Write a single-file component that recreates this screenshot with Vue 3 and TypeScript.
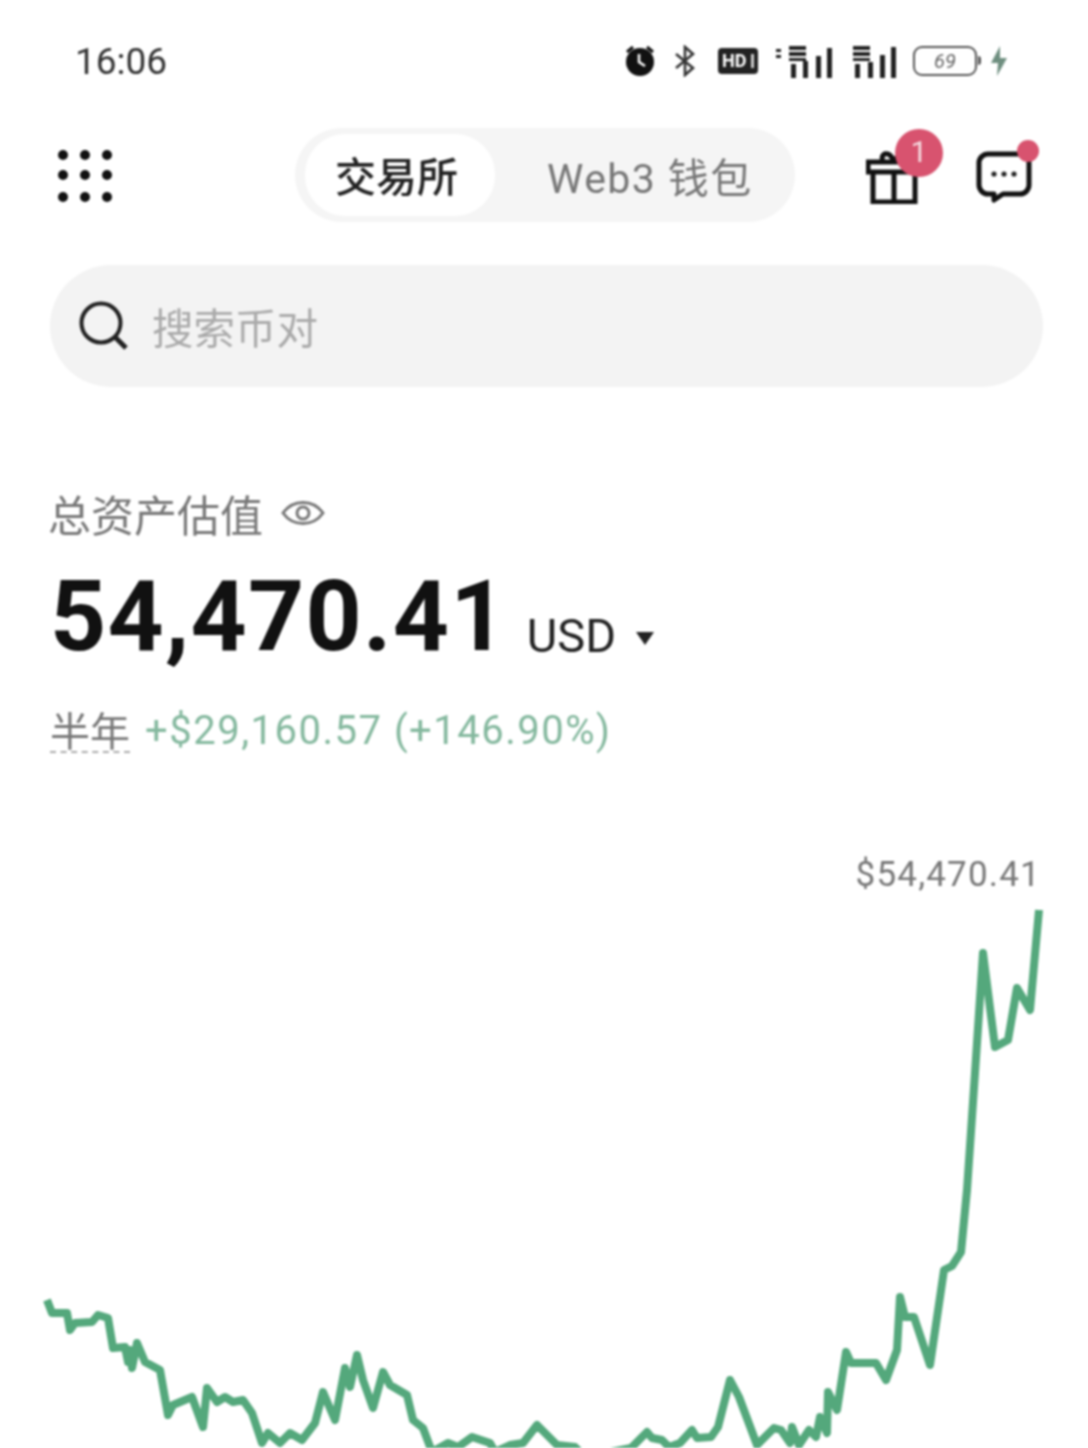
<script setup lang="ts">
// balance history, in page pixels (svg viewBox starts at the chart's top)
const history: [number, number][] = [
  [47, 1300], [52, 1313], [67, 1313], [70, 1330], [75, 1323], [92, 1322], [98, 1315], [108, 1318],
  [113, 1348], [125, 1347], [128, 1362], [130, 1350], [132, 1368], [137, 1343], [145, 1362], [160, 1370], [168, 1415], [173, 1405],
  [192, 1397], [203, 1427], [207, 1388], [217, 1402], [225, 1397], [233, 1402], [243, 1400], [252, 1413],
  [262, 1443], [268, 1433], [280, 1443], [290, 1433], [302, 1440], [315, 1423], [323, 1392], [335, 1420],
  [345, 1368], [350, 1387], [357, 1355], [363, 1380], [373, 1408], [383, 1372], [390, 1385], [407, 1395],
  [413, 1420], [423, 1428], [432, 1452], [448, 1443], [458, 1447], [472, 1437], [490, 1443], [495, 1452],
  [510, 1445], [523, 1443], [537, 1425], [557, 1445], [575, 1447], [585, 1457], [631, 1448], [647, 1432],
  [652, 1438], [662, 1440], [669, 1447], [680, 1443], [692, 1430], [697, 1438], [711, 1437], [718, 1427],
  [730, 1380], [739, 1397], [757, 1445], [774, 1428], [781, 1430], [790, 1443], [792, 1427], [799, 1445],
  [809, 1430], [816, 1437], [820, 1417], [827, 1433], [828, 1392], [837, 1410], [846, 1352], [851, 1363],
  [876, 1363], [886, 1380], [897, 1350], [900, 1297], [905, 1317], [914, 1317], [930, 1365], [944, 1270],
  [952, 1266], [961, 1252], [967, 1190], [975, 1073], [983, 953], [995, 1047], [1008, 1040], [1017, 988],
  [1030, 1010], [1039, 910],
]
const linePoints = history.map(([x, y]) => `${x},${y}`).join(' ')

const dots = [155, 175, 197].flatMap((y) => [63, 85, 107].map((x) => ({ x, y })))
</script>

<template>
  <div class="page">
    <div class="status">
      <span class="time">16:06</span>
      <div class="status-icons">
        <svg width="34" height="34" viewBox="0 0 34 34" class="ic-alarm">
          <circle cx="17" cy="18" r="14" fill="#111" />
          <path d="M4 8l6-5M30 8l-6-5" stroke="#111" stroke-width="3" />
          <path d="M16 10v8l6 4" stroke="#fff" stroke-width="2.5" fill="none" />
        </svg>
        <svg width="22" height="32" viewBox="0 0 22 32" class="ic-bt">
          <path d="M2 9l17 14-8 7V2l8 7L2 23" stroke="#333" stroke-width="2.6" fill="none" />
        </svg>
        <svg width="40" height="26" viewBox="0 0 40 26" class="ic-hd">
          <rect width="40" height="26" rx="4" fill="#222" />
          <text x="4" y="19" class="hd-text">HD</text>
          <rect x="33" y="6" width="3" height="14" fill="#ccc" />
        </svg>
        <svg width="60" height="34" viewBox="0 0 60 34" class="ic-sig">
          <g fill="#222">
            <rect x="2" y="5" width="5" height="3" />
            <rect x="2" y="11" width="5" height="3" />
            <rect x="15" y="2" width="17" height="4" />
            <rect x="15" y="8" width="17" height="4" />
            <rect x="15" y="14" width="17" height="3" />
            <rect x="17" y="20" width="5" height="14" />
            <rect x="29" y="17" width="5" height="17" />
            <rect x="42" y="12" width="5" height="22" />
            <rect x="53" y="4" width="5" height="30" />
          </g>
        </svg>
        <svg width="45" height="34" viewBox="0 0 45 34" class="ic-sig2">
          <g fill="#222">
            <rect x="1" y="2" width="17" height="4" />
            <rect x="1" y="8" width="17" height="4" />
            <rect x="1" y="14" width="17" height="3" />
            <rect x="3" y="20" width="5" height="14" />
            <rect x="16" y="18" width="5" height="16" />
            <rect x="28" y="11" width="5" height="23" />
            <rect x="39" y="3" width="5" height="31" />
          </g>
        </svg>
        <div class="battery"><span>69</span></div>
        <svg width="18" height="30" viewBox="0 0 18 30" class="ic-bolt">
          <path d="M10 0L1 17h7l-1 13 10-18h-7z" fill="#6f8f80" />
        </svg>
      </div>
    </div>

    <div class="nav">
      <svg width="70" height="70" viewBox="50 140 70 70" class="menu">
        <circle v-for="(d, i) in dots" :key="i" :cx="d.x" :cy="d.y" r="5" fill="#111" />
      </svg>
      <div class="tabs">
        <div class="tab active">交易所</div>
        <div class="tab">Web3 钱包</div>
      </div>
      <div class="nav-icons">
        <div class="gift">
          <svg width="56" height="60" viewBox="0 0 56 60">
            <path
              d="M7 28h42v30H7zM28 28v30M2 18h52v10H2zM17 18c-4-10 8-12 11 0M28 18c3-8 10-8 11-3"
              fill="none"
              stroke="#111"
              stroke-width="5"
            />
          </svg>
          <span class="badge">1</span>
        </div>
        <div class="chat">
          <svg width="56" height="52" viewBox="0 0 56 52">
            <path
              d="M12 3h32a9 9 0 0 1 9 9v22a9 9 0 0 1-9 9H27l-9 6v-6h-6a9 9 0 0 1-9-9V12a9 9 0 0 1 9-9z"
              fill="none"
              stroke="#111"
              stroke-width="5"
              stroke-linejoin="round"
            />
            <circle cx="18" cy="23" r="2.6" fill="#222" />
            <circle cx="28" cy="23" r="2.6" fill="#222" />
            <circle cx="38" cy="23" r="2.6" fill="#222" />
          </svg>
          <span class="dot"></span>
        </div>
      </div>
    </div>

    <div class="search">
      <svg width="50" height="50" viewBox="0 0 50 50">
        <circle cx="22" cy="22" r="19.5" fill="none" stroke="#222" stroke-width="4" />
        <path d="M36 36l11 11" stroke="#222" stroke-width="5" />
      </svg>
      <span class="placeholder">搜索币对</span>
    </div>

    <div class="label">
      <span>总资产估值</span>
      <svg width="44" height="30" viewBox="0 0 44 30">
        <path d="M2 15C12 1 32 1 42 15 32 29 12 29 2 15z" fill="none" stroke="#777" stroke-width="3" />
        <circle cx="22" cy="15" r="6" fill="none" stroke="#777" stroke-width="3" />
      </svg>
    </div>

    <div class="amount">
      <span class="value">54,470.41</span>
      <span class="unit">USD</span>
      <span class="caret"></span>
    </div>

    <div class="change">
      <span class="period">半年</span>
      <span class="delta">+$29,160.57 (+146.90%)</span>
    </div>

    <div class="last">$54,470.41</div>
    <svg class="chart" width="1088" height="555" viewBox="0 893 1088 555">
      <polyline :points="linePoints" fill="none" stroke="#54a87c" stroke-width="8" stroke-linejoin="round" />
    </svg>
  </div>
</template>

<style scoped>
.page {
  width: 1088px;
  height: 1448px;
  overflow: hidden;
  background: #fff;
  font-family: Roboto, "Noto Sans CJK SC", sans-serif;
  color: #111;
  filter: blur(0.9px);
}

.status {
  height: 122px;
  display: flex;
  align-items: center;
  justify-content: space-between;
  padding: 0 80px 0 75px;
}
.time {
  font-size: 37px;
  color: #333;
}
.status-icons {
  display: flex;
  align-items: center;
}
.ic-alarm {
  margin-right: 1px;
}
.ic-bt {
  margin-left: 16px;
}
.ic-hd {
  margin-left: 22px;
}
.ic-sig {
  margin-left: 16px;
}
.ic-sig2 {
  margin-left: 18px;
}
.hd-text {
  font-size: 18px;
  font-weight: 700;
  fill: #fff;
}
.battery {
  position: relative;
  margin-left: 16px;
  width: 64px;
  height: 30px;
  border: 2px solid #555;
  border-radius: 9px;
  box-sizing: border-box;
  display: flex;
  align-items: center;
  justify-content: center;
  font-size: 20px;
  font-style: italic;
  color: #666;
}
.battery::after {
  content: "";
  position: absolute;
  right: -6px;
  top: 8px;
  width: 3px;
  height: 9px;
  border-radius: 0 3px 3px 0;
  background: #555;
}
.ic-bolt {
  margin-left: 13px;
}

.nav {
  margin-top: 6px;
  height: 94px;
  display: grid;
  grid-template-columns: 295px 500px 1fr;
  align-items: center;
}
.menu {
  margin-left: 50px;
}
.tabs {
  height: 94px;
  border-radius: 47px;
  background: #f5f5f5;
  display: flex;
  align-items: center;
  padding-left: 10px;
  box-sizing: border-box;
}
.tab {
  font-size: 41px;
  color: #777;
  padding-left: 52px;
  letter-spacing: 1.4px;
}
.tab.active {
  width: 190px;
  height: 82px;
  box-sizing: border-box;
  padding-left: 30px;
  line-height: 88px;
  border-radius: 40px;
  background: #fff;
  color: #222;
  font-weight: 500;
  letter-spacing: 0;
}

.nav-icons {
  display: flex;
  align-items: center;
  margin-left: 71px;
  gap: 54px;
}
.gift {
  position: relative;
  width: 56px;
  height: 60px;
  margin-top: -2px;
}
.badge {
  position: absolute;
  left: 29px;
  top: -15px;
  width: 48px;
  height: 48px;
  border-radius: 50%;
  background: #d8536f;
  color: #f5dbe0;
  font-size: 30px;
  line-height: 46px;
  text-align: center;
}
.chat {
  position: relative;
  width: 56px;
  height: 52px;
  margin-top: 4px;
}
.dot {
  position: absolute;
  right: -7px;
  top: -11px;
  width: 22px;
  height: 22px;
  border-radius: 50%;
  background: #d8536f;
}

.search {
  margin: 43px 45px 0 50px;
  height: 122px;
  border-radius: 61px;
  background: #f3f3f3;
  display: flex;
  align-items: center;
  padding-left: 29px;
  gap: 23px;
}
.placeholder {
  font-size: 41.5px;
  color: #aaa;
}

.label {
  margin: 101px 0 0 48px;
  height: 50px;
  display: flex;
  align-items: center;
  gap: 18px;
  font-size: 43px;
  color: #777;
}

.amount {
  margin: 29px 0 0 50px;
  height: 100px;
  display: flex;
  align-items: baseline;
}
.value {
  font-size: 98px;
  line-height: 100px;
  font-weight: 700;
  letter-spacing: 1.3px;
  color: #111;
}
.unit {
  margin-left: 19px;
  font-size: 47px;
  color: #222;
  transform: translateY(2px);
}
.caret {
  margin-left: 20px;
  width: 0;
  height: 0;
  border-left: 9px solid transparent;
  border-right: 9px solid transparent;
  border-top: 13px solid #222;
  transform: translateY(-5px);
}

.change {
  margin: 38px 0 0 50px;
  height: 50px;
  display: flex;
  align-items: center;
  gap: 15px;
  font-size: 40px;
}
.period {
  color: #777;
  height: 43px;
  border-bottom: 2px dashed #aaa;
  line-height: 50px;
}
.delta {
  color: #84b89e;
  letter-spacing: 1.5px;
}

.last {
  margin: 98px 47px 0 0;
  height: 40px;
  line-height: 44px;
  text-align: right;
  font-size: 35px;
  letter-spacing: 1.2px;
  color: #777;
}
.chart {
  display: block;
}
</style>
